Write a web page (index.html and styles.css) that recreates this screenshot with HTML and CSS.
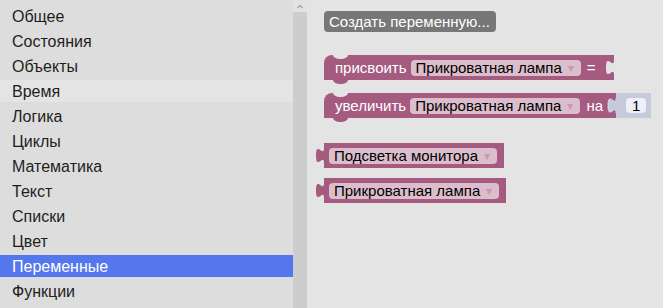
FILE: index.html
```html
<!DOCTYPE html>
<html lang="ru">
<head>
<meta charset="utf-8">
<link rel="stylesheet" href="styles.css">
</head>
<body>
<div class="app">
  <div class="toolbox">
    <div class="tree-row">Общее</div>
    <div class="tree-row">Состояния</div>
    <div class="tree-row">Объекты</div>
    <div class="tree-row hover">Время</div>
    <div class="tree-row">Логика</div>
    <div class="tree-row">Циклы</div>
    <div class="tree-row">Математика</div>
    <div class="tree-row">Текст</div>
    <div class="tree-row">Списки</div>
    <div class="tree-row">Цвет</div>
    <div class="tree-row selected">Переменные</div>
    <div class="tree-row">Функции</div>
  </div>
  <div class="scrollbar">
    <div class="sb-up"><svg width="14" height="12" viewBox="0 0 14 12"><path d="M4.5 8 L7 5.5 L9.5 8" fill="none" stroke="#a3a3a3" stroke-width="1.3"/></svg></div>
    <div class="sb-track"></div>
  </div>
  <div class="flyout">
    <div class="fly-btn">Создать переменную...</div>

    <div class="block stmt b1">
      <span class="label">присвоить</span>
      <span class="field">Прикроватная лампа<span class="arrow">▾</span></span>
      <span class="label eq">=</span>
      <svg class="socket" width="9" height="25" viewBox="0 0 9 25"><path d="M9 5 C9 15 1 -3 1 12.5 S9 10 9 20 Z" fill="#e4e4e4"/></svg>
    </div>

    <div class="pair b2">
      <div class="block stmt">
        <span class="label">увеличить</span>
        <span class="field">Прикроватная лампа<span class="arrow">▾</span></span>
        <span class="label na">на</span>
        <svg class="socket" width="9" height="25" viewBox="0 0 9 25"><path d="M9 5 C9 15 1 -3 1 12.5 S9 10 9 20 Z" fill="#c6cadd"/><path d="M9 5 C9 15 1 -3 1 12.5 S9 10 9 20" fill="none" stroke="#dfe2ee" stroke-width="0.8"/></svg>
      </div>
      <div class="shadow"><span class="num">1</span></div>
    </div>

    <div class="block out b3">
      <svg class="tab" width="8" height="25" viewBox="0 0 8 25"><path d="M8 5 C8 15 0 -3 0 12.5 S8 10 8 20 Z" fill="#a55b80"/></svg>
      <span class="field">Подсветка монитора<span class="arrow">▾</span></span>
    </div>
    <div class="block out b4">
      <svg class="tab" width="8" height="25" viewBox="0 0 8 25"><path d="M8 5 C8 15 0 -3 0 12.5 S8 10 8 20 Z" fill="#a55b80"/></svg>
      <span class="field">Прикроватная лампа<span class="arrow">▾</span></span>
    </div>
  </div>
</div>
</body>
</html>
```
FILE: styles.css
```css
html, body {
  margin: 0;
  padding: 0;
  overflow: hidden;
}
body {
  font-family: "Liberation Sans", Arial, sans-serif;
}
.app {
  display: flex;
  height: 308px;
  width: 663px;
}
.toolbox {
  width: 293px;
  flex: none;
  background: #dddddd;
  padding-top: 5px;
  box-sizing: border-box;
}
.tree-row {
  height: 22px;
  line-height: 23px;
  margin-bottom: 3px;
  padding-left: 12px;
  font-size: 16px;
  color: #1e1e1e;
}
.tree-row.hover {
  background: #e4e4e4;
}
.tree-row.selected {
  background: #5577ee;
  color: #fff;
}
.scrollbar {
  width: 14px;
  flex: none;
  display: flex;
  flex-direction: column;
  background: #cdcdcd;
}
.sb-up {
  height: 12px;
  background: #e3e3e3;
}
.sb-up svg {
  display: block;
}
.sb-track {
  flex: 1;
}
.flyout {
  flex: 1;
  background: #e4e4e4;
  padding: 11px 0 0 17px;
  display: flex;
  flex-direction: column;
  align-items: flex-start;
  font-size: 15px;
}
.fly-btn {
  height: 21px;
  line-height: 21px;
  padding: 0 6px 0 5px;
  background: #777777;
  color: #fff;
  border-radius: 4px;
}
.block {
  position: relative;
  display: flex;
  align-items: center;
  height: 25px;
  background: #a55b80;
  color: #fff;
  white-space: nowrap;
}
.stmt {
  border-radius: 8px 0 0 0;
  padding-left: 11px;
}
.stmt::before {
  content: "";
  position: absolute;
  top: 0;
  left: 9px;
  width: 15px;
  height: 4px;
  background: #e4e4e4;
  border-radius: 0 0 7px 7px / 0 0 4px 4px;
}
.stmt::after {
  content: "";
  position: absolute;
  bottom: -4px;
  left: 9px;
  width: 15px;
  height: 4px;
  background: #a55b80;
  border-radius: 0 0 7px 7px / 0 0 4px 4px;
}
.b1 {
  margin-top: 23px;
}
.label {
  margin-right: 4px;
}
.field {
  display: flex;
  align-items: center;
  height: 16px;
  line-height: 16px;
  padding: 0 7px 0 5px;
  border-radius: 4px;
  background: #dbbdcc;
  color: #000;
}
.arrow {
  margin-left: 6px;
  font-size: 12px;
  color: #c49cb0;
}
.stmt .field {
  margin-right: 6px;
}
.eq {
  margin-right: 9px;
}
.na {
  margin-right: 4px;
}
.socket {
  display: block;
  align-self: stretch;
}
.pair {
  display: flex;
  margin-top: 13px;
}
.shadow {
  display: flex;
  align-items: center;
  height: 25px;
  padding: 0 5px 0 10px;
  background: #c6cadd;
}
.num {
  height: 15px;
  line-height: 15px;
  padding: 0 6px;
  border-radius: 4px;
  background: #eef0f7;
  color: #000;
}
.out {
  padding: 0 7px 0 5px;
}
.tab {
  position: absolute;
  left: -8px;
  top: 0;
  display: block;
}
.b3 {
  margin-top: 25px;
}
.b4 {
  margin-top: 10px;
}
```
